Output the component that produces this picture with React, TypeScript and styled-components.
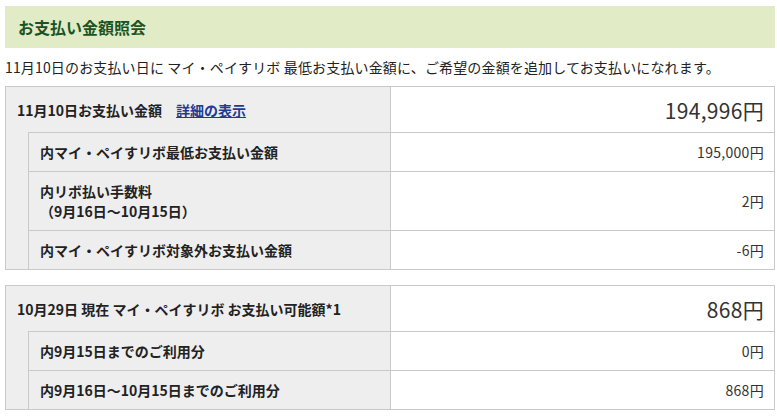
import React from "react";
import styled, { createGlobalStyle } from "styled-components";

const GlobalStyle = createGlobalStyle`
  html, body { margin: 0; padding: 0; background: #ffffff; }
  body {
    font-family: "Noto Sans CJK JP", "Noto Sans", sans-serif;
    color: #222222;
    font-size: 14px;
  }
`;

const Page = styled.div`
  display: flex;
  flex-direction: column;
  padding: 6px 2px 0 5px;
  width: 770px;
`;

const TitleBar = styled.h1`
  margin: 0;
  height: 42px;
  display: flex;
  align-items: center;
  padding-left: 13px;
  background: #e1ebc6;
  color: #1b5424;
  font-size: 16px;
  font-weight: 700;
`;

const Lead = styled.p`
  margin: 9px 0 9px 0;
  line-height: 20px;
  font-size: 14px;
  letter-spacing: 0.15px;
  color: #222222;
  white-space: nowrap;
`;

const Table = styled.section<{ $gap?: boolean }>`
  border: 1px solid #c9c9c9;
  margin-top: ${(p) => (p.$gap ? "15px" : "0")};
  background: #eeeeee;
`;

const Row = styled.div`
  display: grid;
  grid-template-columns: 384px 1fr;
`;

const HeadLabel = styled.div`
  display: flex;
  align-items: center;
  height: 45px;
  padding-left: 11px;
  font-weight: 700;
  background: #eeeeee;
  white-space: nowrap;
`;

const DetailLink = styled.a`
  color: #1e3c93;
  text-decoration: underline;
  font-weight: 700;
  margin-left: 14px;
  cursor: pointer;
`;

const Indent = styled.div`
  padding-left: 22px;
  background: #eeeeee;
  display: flex;
`;

const SubLabel = styled.div`
  flex: 1;
  display: flex;
  align-items: center;
  min-height: 39px;
  padding: 9px 11px;
  box-sizing: border-box;
  border-left: 1px solid #c9c9c9;
  border-top: 1px solid #c9c9c9;
  font-weight: 700;
  line-height: 20px;
  white-space: nowrap;
`;

const Value = styled.div<{ $big?: boolean; $sub?: boolean }>`
  display: flex;
  align-items: center;
  justify-content: flex-end;
  background: #ffffff;
  border-left: 1px solid #c9c9c9;
  border-top: ${(p) => (p.$sub ? "1px solid #c9c9c9" : "none")};
  padding-right: 10px;
  font-size: ${(p) => (p.$big ? "21px" : "14px")};
  letter-spacing: ${(p) => (p.$big ? "0.3px" : "0.3px")};
  color: #333333;
  white-space: nowrap;
`;

type Sub = { label: React.ReactNode; value: string };

const subs1: Sub[] = [
  { label: "内マイ・ペイすリボ最低お支払い金額", value: "195,000円" },
  {
    label: (
      <>
        内リボ払い手数料
        <br />
        （9月16日～10月15日）
      </>
    ),
    value: "2円",
  },
  { label: "内マイ・ペイすリボ対象外お支払い金額", value: "-6円" },
];

const subs2: Sub[] = [
  { label: "内9月15日までのご利用分", value: "0円" },
  { label: "内9月16日～10月15日までのご利用分", value: "868円" },
];

const SubRows: React.FC<{ items: Sub[] }> = ({ items }) => (
  <>
    {items.map((s, i) => (
      <Row key={i}>
        <Indent>
          <SubLabel>
            <span>{s.label}</span>
          </SubLabel>
        </Indent>
        <Value $sub>{s.value}</Value>
      </Row>
    ))}
  </>
);

export default function App() {
  return (
    <>
      <GlobalStyle />
      <Page>
        <TitleBar>お支払い金額照会</TitleBar>
        <Lead>
          11月10日のお支払い日に マイ・ペイすリボ 最低お支払い金額に、ご希望の金額を追加してお支払いになれます。
        </Lead>
        <Table>
          <Row>
            <HeadLabel>
              11月10日お支払い金額
              <DetailLink>詳細の表示</DetailLink>
            </HeadLabel>
            <Value $big>194,996円</Value>
          </Row>
          <SubRows items={subs1} />
        </Table>
        <Table $gap>
          <Row>
            <HeadLabel>10月29日 現在 マイ・ペイすリボ お支払い可能額*1</HeadLabel>
            <Value $big>868円</Value>
          </Row>
          <SubRows items={subs2} />
        </Table>
      </Page>
    </>
  );
}
